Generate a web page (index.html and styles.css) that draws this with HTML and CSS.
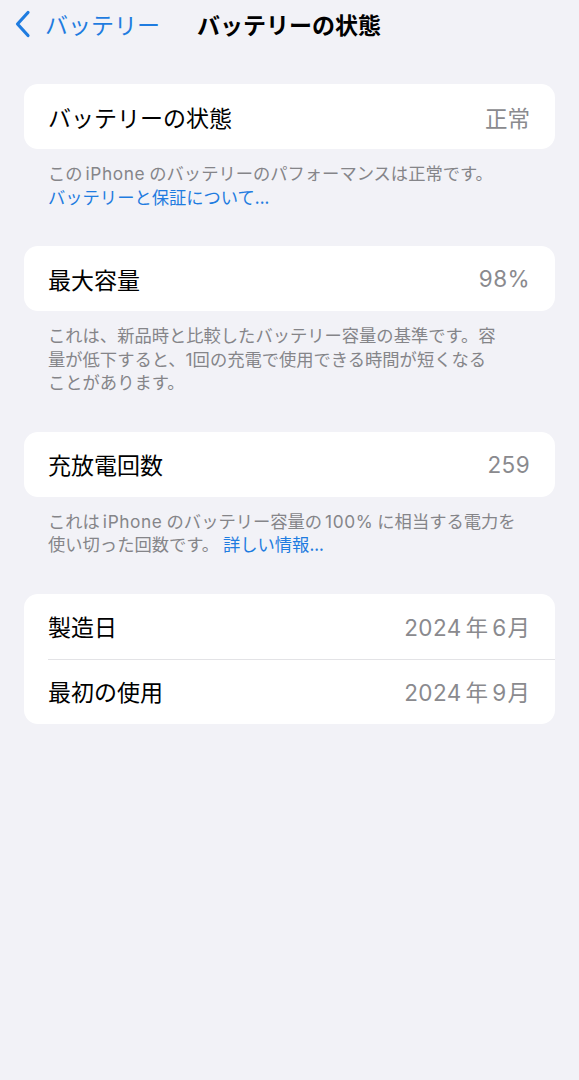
FILE: index.html
```html
<!DOCTYPE html>
<html lang="ja">
<head>
<meta charset="utf-8">
<link rel="stylesheet" href="styles.css">
</head>
<body>
<div class="page">
  <header class="nav">
    <div class="back">
      <svg class="chev" width="18" height="28" viewBox="0 0 18 28"><path d="M14 2.5 L3.5 14 L14 25.5" fill="none" stroke="#1f7ce0" stroke-width="3.2" stroke-linecap="round" stroke-linejoin="round"/></svg>
      <span class="back-label">バッテリー</span>
    </div>
    <h1 class="title">バッテリーの状態</h1>
  </header>

  <section class="group">
    <div class="card">
      <div class="row"><span class="label">バッテリーの状態</span><span class="value">正常</span></div>
    </div>
    <p class="footer">この<span class="lat">iPhone</span>のバッテリーのパフォーマンスは正常です。<br><span class="link">バッテリーと保証について...</span></p>
  </section>

  <section class="group">
    <div class="card">
      <div class="row"><span class="label">最大容量</span><span class="value num">98%</span></div>
    </div>
    <p class="footer">これは、新品時と比較したバッテリー容量の基準です。容<br>量が低下すると、<span class="dig">1</span>回の充電で使用できる時間が短くなる<br>ことがあります。</p>
  </section>

  <section class="group">
    <div class="card">
      <div class="row"><span class="label">充放電回数</span><span class="value num">259</span></div>
    </div>
    <p class="footer">これは<span class="lat">iPhone</span>のバッテリー容量の<span class="lat">100%</span>に相当する電力を<br>使い切った回数です。 <span class="link">詳しい情報...</span></p>
  </section>

  <section class="group">
    <div class="card">
      <div class="row"><span class="label">製造日</span><span class="value"><span class="vlat">2024</span>年<span class="vlat">6</span>月</span></div>
      <div class="row sep"><span class="label">最初の使用</span><span class="value"><span class="vlat">2024</span>年<span class="vlat">9</span>月</span></div>
    </div>
  </section>
</div>
</body>
</html>
```

FILE: styles.css
```css
html, body {
  margin: 0;
  padding: 0;
  background: #f2f2f7;
}
body {
  font-family: "Noto Sans CJK JP", "Noto Sans", sans-serif;
  color: #000;
  width: 579px;
  height: 1080px;
  overflow: hidden;
}
.page {
  padding: 0 24px;
}
.nav {
  height: 48px;
  display: flex;
  align-items: center;
  margin-left: -10px;
}
.back {
  display: flex;
  align-items: center;
  gap: 13px;
  color: #1f7ce0;
}
.chev {
  display: block;
}
.back-label {
  font-size: 23px;
  line-height: 28px;
}
.title {
  margin: 0 0 0 37px;
  font-size: 23px;
  font-weight: 700;
  line-height: 28px;
}
.group {
  margin-top: 36px;
}
.group + .group {
  margin-top: 38px;
}
.card {
  background: #fff;
  border-radius: 14px;
  overflow: hidden;
}
.row {
  height: 65px;
  display: flex;
  align-items: center;
  justify-content: space-between;
  padding: 0 25px 0 24px;
  font-size: 23px;
  position: relative;
}
.row.sep::before {
  content: "";
  position: absolute;
  top: 0;
  left: 24px;
  right: 0;
  height: 1px;
  background: #e3e3e6;
}
.label {
  color: #000;
}
.value {
  color: #8a8a8e;
  font-size: 22.5px;
}
.num {
  font-family: Inter, "Noto Sans CJK JP", sans-serif;
  letter-spacing: 0.4px;
}
.vlat {
  font-family: Inter, "Noto Sans CJK JP", sans-serif;
  letter-spacing: 0.4px;
  margin: 0 4px 0 0;
}
.value .vlat:nth-of-type(2) {
  margin: 0 1px 0 4px;
}
.footer {
  margin: 0;
  padding: 12px 24px 0 24px;
  font-size: 17.3px;
  line-height: 23.5px;
  color: #858589;
}
.lat {
  font-family: Inter, "Noto Sans CJK JP", sans-serif;
  letter-spacing: 0.6px;
  margin: 0 4px 0 3px;
  line-height: 1;
}
.dig {
  font-family: Inter, "Noto Sans CJK JP", sans-serif;
  line-height: 1;
}
.link {
  color: #1f7ce0;
}
```
